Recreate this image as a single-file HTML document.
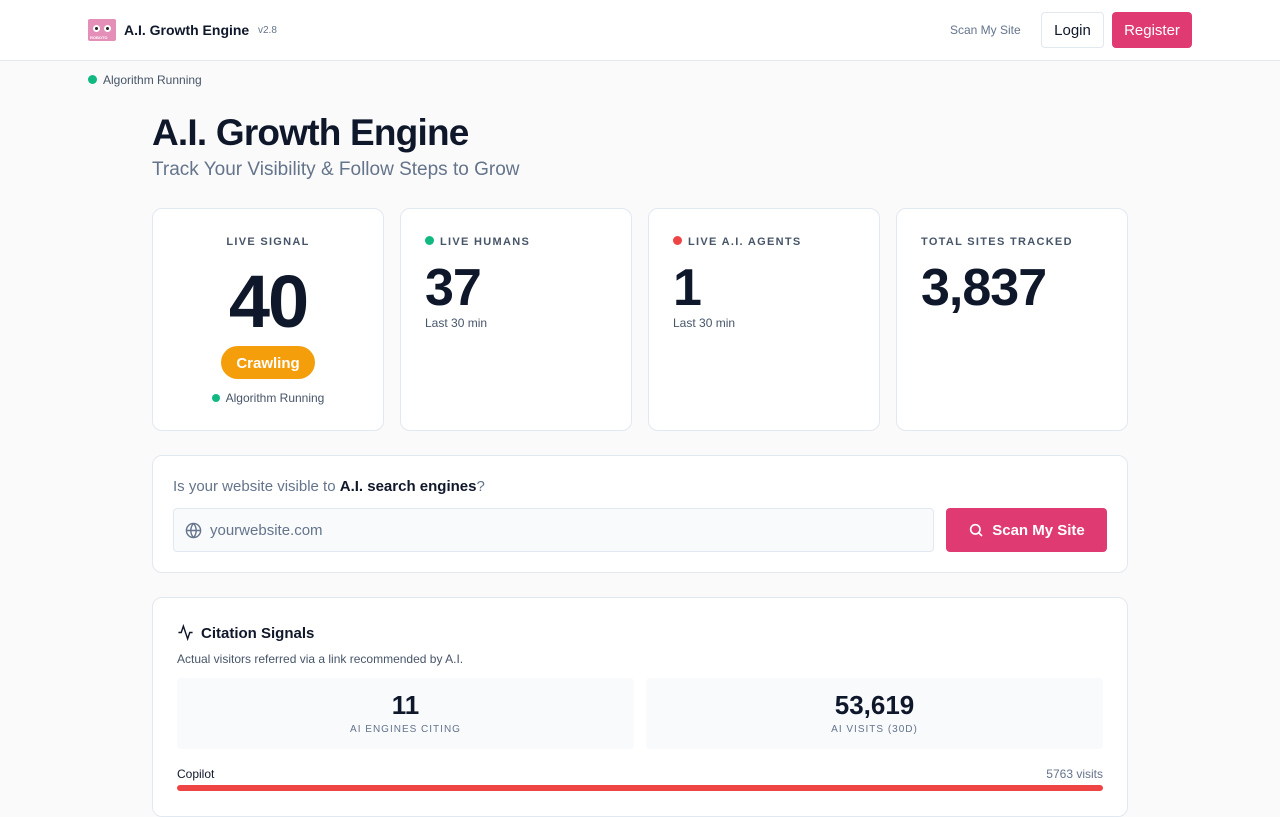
<!DOCTYPE html>
<html><head><meta charset="utf-8"><style>
*{box-sizing:border-box;margin:0;padding:0}
body{width:1280px;height:800px;overflow:hidden;background:#fafafa;font-family:"Liberation Sans",sans-serif;color:#0f172a}
.hdr{height:61px;background:#fff;border-bottom:1px solid #e2e8f0;position:relative}
.logo{position:absolute;left:88px;top:19px;width:28px;height:22px;background:#e48fb8;border-radius:2px}
.logo i{position:absolute;top:6px;width:7px;height:7px;background:#fff;border-radius:50%}
.logo i:after{content:"";position:absolute;left:2px;top:2px;width:3px;height:3px;background:#222;border-radius:50%}
.logo b{position:absolute;bottom:1px;left:2px;font-size:4px;color:#fff;letter-spacing:0}
.t{position:absolute;left:124px;top:22px;font-size:14px;font-weight:bold;color:#0f172a}
.v{position:absolute;left:258px;top:25px;font-size:10px;color:#64748b}
.scan{position:absolute;left:950px;top:23px;font-size:12px;color:#64748b}
.login{position:absolute;left:1041px;top:12px;width:63px;height:36px;border:1px solid #e2e8f0;border-radius:4px;background:#fff;font-size:15px;text-align:center;line-height:36px}
.reg{position:absolute;left:1112px;top:12px;width:80px;height:36px;border-radius:4px;background:#e03a72;color:#fff;font-size:15px;text-align:center;line-height:38px}
.dot{display:inline-block;width:9px;height:9px;border-radius:50%;background:#10b981;margin-right:6px}
.run{position:absolute;left:88px;top:73px;font-size:12px;color:#475569}
h1{position:absolute;left:152px;top:112px;font-size:37px;font-weight:bold;letter-spacing:-0.8px}
.sub{position:absolute;left:152px;top:159px;font-size:19px;color:#64748b}
.card{position:absolute;top:208px;width:232px;height:223px;background:#fff;border:1px solid #e2e8f0;border-radius:10px}
.lab{font-size:11px;font-weight:bold;letter-spacing:1.3px;color:#475569;position:absolute;top:27px;left:24px}
.big{font-size:52px;font-weight:bold;position:absolute;top:49px;left:24px;letter-spacing:-1px}
.sm{font-size:12px;color:#475569;position:absolute;top:107px;left:24px}
.box{position:absolute;left:152px;width:976px;background:#fff;border:1px solid #e2e8f0;border-radius:10px}
.inp{position:absolute;left:20px;top:52px;width:761px;height:44px;border:1px solid #e2e8f0;border-radius:4px;background:#f8fafc;font-size:15px;color:#64748b;padding:13px 0 0 36px}
.btn{position:absolute;left:793px;top:52px;width:161px;height:44px;background:#e03a72;border-radius:4px;color:#fff;font-size:15px;font-weight:bold;text-align:center;line-height:46px}
.stat{position:absolute;top:80px;width:457px;height:71px;background:#f8fafc;border-radius:4px;text-align:center}
.stat b{display:block;font-size:26px;margin-top:12px}
.stat span{font-size:10px;color:#64748b;letter-spacing:1px;position:relative;top:-2px}
</style></head><body>
<div class="hdr">
<div class="logo"><i style="left:5px"></i><i style="left:16px"></i><b>ROBOTO</b></div>
<div class="t">A.I. Growth Engine</div><div class="v">v2.8</div>
<div class="scan">Scan My Site</div><div class="login">Login</div><div class="reg">Register</div>
</div>
<div class="run"><span class="dot"></span>Algorithm Running</div>
<h1>A.I. Growth Engine</h1>
<div class="sub">Track Your Visibility &amp; Follow Steps to Grow</div>
<div class="card" style="left:152px;text-align:center">
<div class="lab" style="left:0;width:100%">LIVE SIGNAL</div>
<div style="position:absolute;top:50px;width:100%;font-size:74px;font-weight:bold;letter-spacing:-2px">40</div>
<div style="position:absolute;left:68px;top:137px;width:94px;height:33px;border-radius:17px;background:#f59e0b;color:#fff;font-weight:bold;font-size:15px;line-height:35px">Crawling</div>
<div style="position:absolute;top:182px;width:100%;font-size:12px;color:#475569"><span class="dot" style="width:8px;height:8px"></span>Algorithm Running</div>
</div>
<div class="card" style="left:400px"><div class="lab"><span class="dot"></span>LIVE HUMANS</div><div class="big">37</div><div class="sm">Last 30 min</div></div>
<div class="card" style="left:648px"><div class="lab"><span class="dot" style="background:#ef4444"></span>LIVE A.I. AGENTS</div><div class="big">1</div><div class="sm">Last 30 min</div></div>
<div class="card" style="left:896px"><div class="lab">TOTAL SITES TRACKED</div><div class="big">3,837</div></div>
<div class="box" style="top:455px;height:118px">
<div style="position:absolute;left:20px;top:22px;font-size:15px;color:#64748b">Is your website visible to <b style="color:#0f172a">A.I. search engines</b>?</div>
<div class="inp"><svg style="position:absolute;left:11px;top:13px" width="17" height="17" viewBox="0 0 24 24" fill="none" stroke="#64748b" stroke-width="2"><circle cx="12" cy="12" r="10"/><path d="M2 12h20M12 2a15 15 0 0 1 0 20M12 2a15 15 0 0 0 0 20"/></svg>yourwebsite.com</div>
<div class="btn"><svg style="vertical-align:-3px;margin-right:8px" width="16" height="16" viewBox="0 0 24 24" fill="none" stroke="#fff" stroke-width="2.5"><circle cx="11" cy="11" r="7"/><path d="M21 21l-5-5"/></svg>Scan My Site</div>
</div>
<div class="box" style="top:597px;height:220px">
<svg style="position:absolute;left:24px;top:26px" width="17" height="17" viewBox="0 0 24 24" fill="none" stroke="#0f172a" stroke-width="2"><path d="M22 12h-4l-3 9L9 3l-3 9H2"/></svg>
<div style="position:absolute;left:48px;top:27px;font-size:15px;font-weight:bold">Citation Signals</div>
<div style="position:absolute;left:24px;top:54px;font-size:12px;color:#475569">Actual visitors referred via a link recommended by A.I.</div>
<div class="stat" style="left:24px"><b>11</b><span>AI ENGINES CITING</span></div>
<div class="stat" style="left:493px"><b>53,619</b><span>AI VISITS (30D)</span></div>
<div style="position:absolute;left:24px;top:169px;font-size:12px">Copilot</div>
<div style="position:absolute;right:24px;top:169px;font-size:12px;color:#64748b">5763 visits</div>
<div style="position:absolute;left:24px;top:187px;width:926px;height:6px;border-radius:3px;background:#ef4444"></div>
</div>
</body></html>
